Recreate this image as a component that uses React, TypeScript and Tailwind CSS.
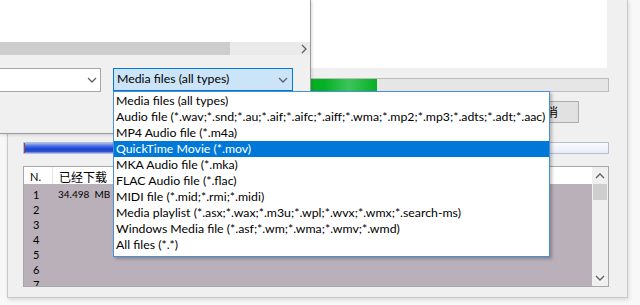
import React from "react";

const fileTypes = [
    "Media files (all types)",
    "Audio file (*.wav;*.snd;*.au;*.aif;*.aifc;*.aiff;*.wma;*.mp2;*.mp3;*.adts;*.adt;*.aac)",
    "MP4 Audio file (*.m4a)",
    "QuickTime Movie (*.mov)",
    "MKA Audio file (*.mka)",
    "FLAC Audio file (*.flac)",
    "MIDI file (*.mid;*.rmi;*.midi)",
    "Media playlist (*.asx;*.wax;*.m3u;*.wpl;*.wvx;*.wmx;*.search-ms)",
    "Windows Media file (*.asf;*.wm;*.wma;*.wmv;*.wmd)",
    "All files (*.*)",
];

const selected = 3;

function Chevron({ dir = "down" }: { dir?: "down" | "up" | "right" }) {
    const pts =
        dir === "down" ? "1,1 5,5 9,1" : dir === "up" ? "1,5 5,1 9,5" : "1,1 5,5 1,9";
    const w = dir === "right" ? 7 : 10;
    const h = dir === "right" ? 10 : 6;
    return (
        <svg width={w} height={h} viewBox={`0 0 ${w} ${h}`}>
            <polyline points={pts} fill="none" stroke="#606060" strokeWidth="1.3" />
        </svg>
    );
}

export default function App() {
    return (
        <div className="relative w-[640px] h-[305px] overflow-hidden bg-[#f8f8f8] font-['Lato','Noto_Sans_CJK_SC',sans-serif] text-[12.3px] text-black">
            {/* main downloader window */}
            <div className="absolute left-[7px] top-0 w-[621px] h-[298px] bg-[#f0f0f0] border-l border-r border-b border-[#c9c9c9] shadow-[1px_2px_4px_rgba(0,0,0,0.12)] pl-[15px] pr-[18px] flex flex-col">
                <div className="h-[68px] bg-white mr-[2px]" />
                <div className="mt-[10px] h-[14px] bg-[#e6e6e6] border border-[#bcbcbc] flex">
                    <div className="w-[353px] bg-[linear-gradient(to_right,#06b025_85%,#3cc55a_92%,#06b025)]" />
                </div>
                <div className="mt-[9px] flex justify-end pr-[30px]">
                    <div className="w-[66px] h-[22px] bg-[#e1e1e1] border border-[#adadad] flex items-center justify-center leading-none text-[12px] font-['Noto_Sans_CJK_SC',sans-serif]">
                        取消
                    </div>
                </div>
                <div className="mt-[19px] h-[12px] border border-[#b4bfd4] bg-[linear-gradient(to_bottom,#fafbfe,#e6ecf7)] flex">
                    <div className="w-[380px] border-l border-[#a04040] bg-[linear-gradient(to_bottom,#a8bcf2,#4a70e4_30%,#1f42cc_60%,#2c50d6_85%,#90a8ec)]" />
                </div>
                <div className="mt-[12px] h-[121px] border border-[#a8a8a8] bg-white flex">
                    <div className="flex-1 flex flex-col">
                        <div className="h-[17px] flex items-end text-[11px] leading-[15px]">
                            <div className="w-[29px] pl-[6px] border-r border-[#e5e5e5] h-full flex items-end">N.</div>
                            <div className="pl-[6px] text-[12px] font-['Noto_Sans_CJK_SC',sans-serif]">已经下载</div>
                        </div>
                        <div className="flex-1 bg-[#bab0ba] pt-[3px] text-[11px] leading-[15px] overflow-hidden">
                            {[1, 2, 3, 4, 5, 6, 7].map((n) => (
                                <div key={n} className="h-[15px] flex">
                                    <div className="w-[34px] pl-[9px]">{n}</div>
                                    {n === 1 && (
                                        <div className="flex items-baseline text-[10px]">
                                            <span>34.498</span>
                                            <span className="ml-[5px]">MB</span>
                                        </div>
                                    )}
                                </div>
                            ))}
                        </div>
                    </div>
                    <div className="w-[16px] bg-[#f0f0f0] flex flex-col items-center">
                        <div className="h-[17px] flex items-center">
                            <Chevron dir="up" />
                        </div>
                        <div className="w-[14px] h-[16px] bg-[#cdcdcd]" />
                        <div className="flex-1" />
                        <div className="h-[17px] flex items-center">
                            <Chevron dir="down" />
                        </div>
                    </div>
                </div>
            </div>

            {/* open file dialog */}
            <div className="absolute left-0 top-0 w-[311px] h-[134px] bg-[#f0f0f0] border-r border-b border-[#9a9a9a] shadow-[1px_1px_3px_rgba(0,0,0,0.15)] flex flex-col">
                <div className="h-[42px] bg-white" />
                <div className="h-[13px] bg-[#eaeaea] flex items-center">
                    <div className="w-[230px] h-full bg-[#cdcdcd]" />
                    <div className="flex-1" />
                    <div className="w-[12px] flex justify-center">
                        <Chevron dir="right" />
                    </div>
                </div>
                <div className="mt-[13px] flex items-start">
                    <div className="w-[101px] h-[24px] bg-white border-t border-r border-b border-[#a6a6a6] flex items-center justify-end pr-[3px]">
                        <Chevron />
                    </div>
                    <div className="ml-[12px] w-[180px] h-[23px] bg-[#cce4f7] border border-[#0078d7] flex items-center justify-between pl-[3px] pr-[4px]">
                        <span>Media files (all types)</span>
                        <Chevron />
                    </div>
                </div>
            </div>

            {/* dropdown list */}
            <div className="absolute left-[113px] top-[91px] w-[437px] h-[166px] bg-white border border-[#4a90d9] shadow-[2px_2px_3px_rgba(0,0,0,0.25)] pt-[1px]">
                {fileTypes.map((t, i) => (
                    <div
                        key={t}
                        className={
                            "h-[16px] leading-[16px] pl-[2px] whitespace-nowrap " +
                            (i === selected ? "bg-[#0078d7] text-white" : "")
                        }
                    >
                        {t}
                    </div>
                ))}
            </div>
        </div>
    );
}
